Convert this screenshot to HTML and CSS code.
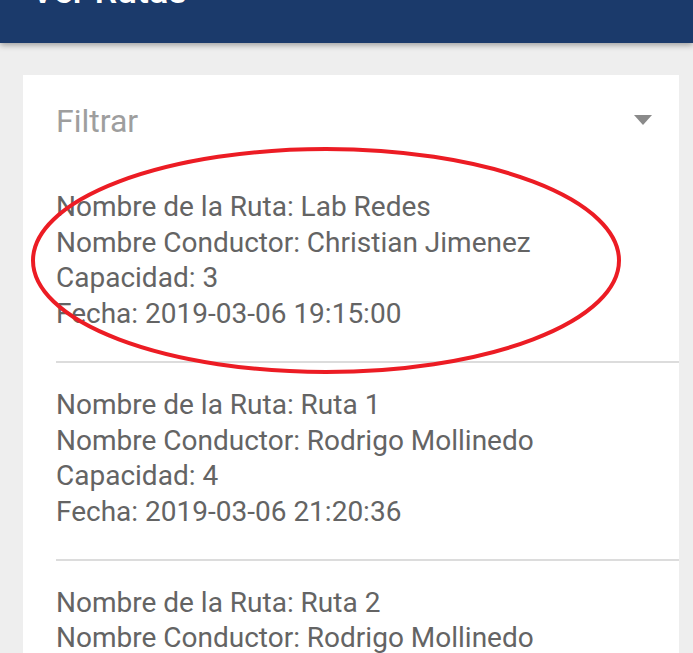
FILE: index.html
```html
<!DOCTYPE html>
<html lang="es">
<head>
<meta charset="utf-8">
<title>Ver Rutas</title>
<link rel="stylesheet" href="styles.css">
</head>
<body>
<header class="appbar">
  <h1 class="appbar-title">Ver Rutas</h1>
</header>
<main class="content">
  <section class="card">
    <div class="filter">
      <span class="filter-label">Filtrar</span>
      <span class="filter-arrow"></span>
    </div>
    <ul class="routes">
      <li class="route">
        <p>Nombre de la Ruta: Lab Redes</p>
        <p>Nombre Conductor: Christian Jimenez</p>
        <p>Capacidad: 3</p>
        <p>Fecha: 2019-03-06 19:15:00</p>
      </li>
      <li class="route">
        <p>Nombre de la Ruta: Ruta 1</p>
        <p>Nombre Conductor: Rodrigo Mollinedo</p>
        <p>Capacidad: 4</p>
        <p>Fecha: 2019-03-06 21:20:36</p>
      </li>
      <li class="route">
        <p>Nombre de la Ruta: Ruta 2</p>
        <p>Nombre Conductor: Rodrigo Mollinedo</p>
      </li>
    </ul>
    <svg class="annotation" width="620" height="320" viewBox="0 0 620 320">
      <ellipse cx="303" cy="185.5" rx="293" ry="111.5" fill="none" stroke="#ec1c24" stroke-width="4"/>
    </svg>
  </section>
</main>
</body>
</html>
```
FILE: styles.css
```css
* { box-sizing: border-box; }
html, body { margin: 0; padding: 0; }
body {
  background: #eeeeee;
  font-family: Roboto, "Noto Sans", sans-serif;
  width: 693px;
  height: 653px;
  overflow: hidden;
}
.appbar {
  background: #1b3a6b;
  height: 43px;
  box-shadow: 0 2px 6px rgba(0,0,0,0.35);
  position: relative;
  z-index: 1;
  overflow: hidden;
}
.appbar-title {
  margin: -29px 0 0;
  padding-left: 31px;
  color: #ffffff;
  font-size: 36px;
  font-weight: 500;
  line-height: 40px;
}
.content {
  padding: 32px 14px 0 23px;
}
.card {
  background: #ffffff;
  position: relative;
  padding: 0 0 0 33px;
  height: 600px;
  overflow: hidden;
}
.filter {
  display: flex;
  align-items: center;
  justify-content: space-between;
  height: 90px;
  padding-right: 27px;
}
.filter-label {
  color: #9e9e9e;
  font-size: 32px;
  padding-top: 1px;
}
.filter-arrow {
  width: 0;
  height: 0;
  border-left: 9.5px solid transparent;
  border-right: 9.5px solid transparent;
  border-top: 10px solid #8a8a8a;
}
.routes {
  list-style: none;
  margin: 0;
  padding: 0;
}
.route {
  padding: 24px 0 29px;
  border-bottom: 2px solid #dcdcdc;
}
.route p {
  margin: 0;
  color: #646464;
  font-size: 28px;
  line-height: 35.7px;
  white-space: nowrap;
}
.annotation {
  position: absolute;
  left: 0;
  top: 0;
  pointer-events: none;
}
```
